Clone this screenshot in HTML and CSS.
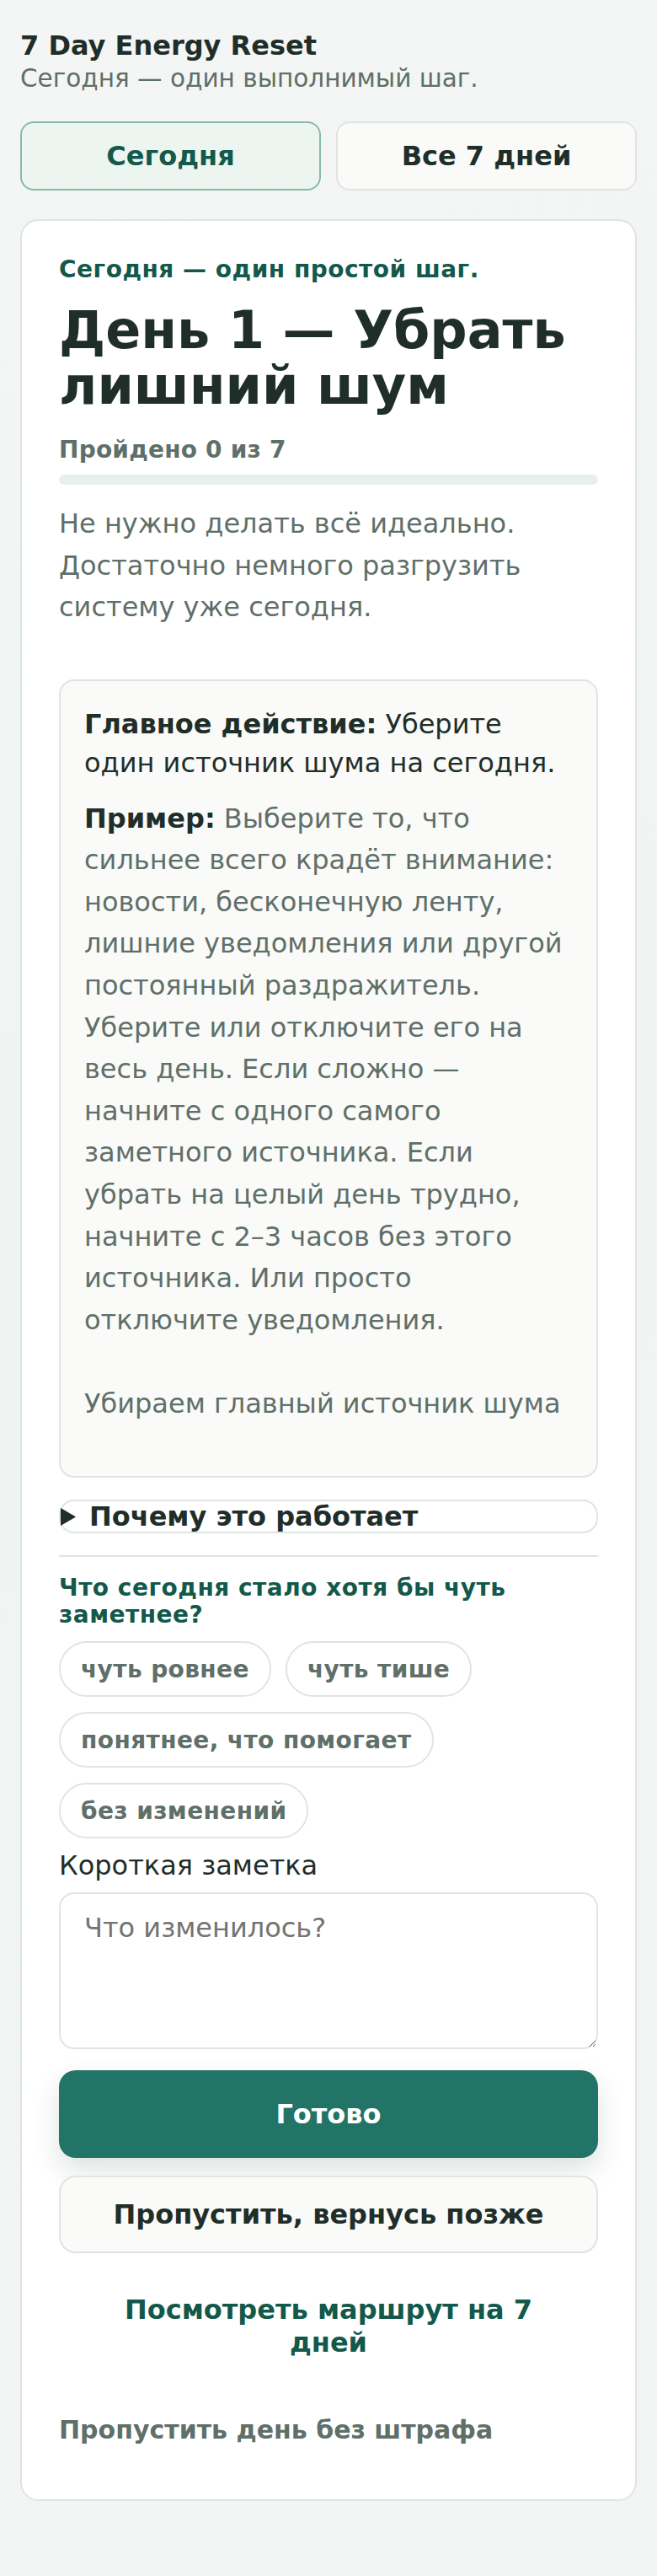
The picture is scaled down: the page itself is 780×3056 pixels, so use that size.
FILE: index.html
```html
<!DOCTYPE html>
<html lang="ru">
<head>
<meta charset="utf-8">
<meta name="viewport" content="width=device-width, initial-scale=1">
<title>7 Day Energy Reset</title>
<link rel="stylesheet" href="styles.css">
</head>
<body>
<main class="app">
  <header class="top">
    <h1 class="brand">7 Day Energy Reset</h1>
    <p class="tagline">Сегодня — один выполнимый шаг.</p>
  </header>

  <nav class="tabs">
    <button class="tab tab-active" type="button">Сегодня</button>
    <button class="tab" type="button">Все 7 дней</button>
  </nav>

  <section class="card">
    <p class="eyebrow">Сегодня — один простой шаг.</p>
    <h2 class="day-title">День 1 — Убрать лишний шум</h2>
    <p class="progress-label">Пройдено 0 из 7</p>
    <div class="progress"><div class="progress-fill" style="width:0%"></div></div>
    <p class="intro">Не нужно делать всё идеально. Достаточно немного разгрузить систему уже сегодня.</p>

    <div class="action">
      <p class="action-main"><strong>Главное действие:</strong> Уберите один источник шума на сегодня.</p>
      <p class="action-example"><strong>Пример:</strong> Выберите то, что сильнее всего крадёт внимание: новости, бесконечную ленту, лишние уведомления или другой постоянный раздражитель. Уберите или отключите его на весь день. Если сложно — начните с одного самого заметного источника. Если убрать на целый день трудно, начните с 2–3 часов без этого источника. Или просто отключите уведомления.<br><br>Убираем главный источник шума</p>
    </div>

    <details class="why">
      <summary>Почему это работает</summary>
      <p class="why-text">Меньше входящих сигналов — меньше переключений внимания и меньше фоновой усталости.</p>
    </details>

    <hr class="divider">

    <h3 class="question">Что сегодня стало хотя бы чуть заметнее?</h3>
    <div class="chips">
      <button class="chip" type="button">чуть ровнее</button>
      <button class="chip" type="button">чуть тише</button>
      <button class="chip" type="button">понятнее, что помогает</button>
      <button class="chip" type="button">без изменений</button>
    </div>

    <label class="note-label" for="note">Короткая заметка</label>
    <textarea id="note" class="note" placeholder="Что изменилось?"></textarea>

    <button class="btn btn-primary" type="button">Готово</button>
    <button class="btn btn-secondary" type="button">Пропустить, вернусь позже</button>
    <button class="btn-link" type="button">Посмотреть маршрут на 7 дней</button>
    <button class="btn-skip" type="button">Пропустить день без штрафа</button>
  </section>
</main>
</body>
</html>
```

FILE: styles.css
```css
* {
  box-sizing: border-box;
}

html {
  background: linear-gradient(160deg, #f4f6f5 0%, #eff4f2 45%, #f3f5f4 100%);
  min-height: 100%;
}

body {
  margin: 0;
  font-family: "DejaVu Sans", "Noto Sans", sans-serif;
  color: #1f2e29;
}

.app {
  padding: 36px 24px 90px;
}

.brand {
  margin: 0;
  font-size: 32px;
  line-height: 37px;
  font-weight: 700;
  color: #1f2e29;
}

.tagline {
  margin: 3px 0 0;
  font-size: 29.5px;
  line-height: 34px;
  color: #5f6f69;
}

.tabs {
  margin-top: 34px;
  display: grid;
  grid-template-columns: 1fr 1fr;
  gap: 18px;
}

.tab {
  height: 82px;
  border: 2px solid #dfe5e2;
  border-radius: 16px;
  background: #fafaf8;
  font-family: inherit;
  font-size: 32px;
  font-weight: 700;
  color: #1f2e29;
}

.tab-active {
  background: #edf5f1;
  border-color: #88b9ab;
  color: #13594b;
}

.card {
  margin-top: 34px;
  padding: 41px 44px 44px;
  background: #ffffff;
  border: 2px solid #dde5e2;
  border-radius: 22px;
}

.eyebrow {
  margin: 0;
  font-size: 28px;
  line-height: 33.6px;
  font-weight: 700;
  letter-spacing: 0.5px;
  color: #13594b;
}

.day-title {
  margin: 22px 0 0;
  font-size: 62px;
  line-height: 66.7px;
  font-weight: 700;
  color: #1f2e29;
}

.progress-label {
  margin: 25.5px 0 0;
  font-size: 28px;
  line-height: 32.6px;
  font-weight: 700;
  letter-spacing: 0.2px;
  color: #5f6f69;
}

.progress {
  margin-top: 13px;
  height: 12px;
  border-radius: 6px;
  background: #e9efec;
  overflow: hidden;
}

.progress-fill {
  height: 100%;
  background: #217466;
}

.intro {
  margin: 22px 0 0;
  font-size: 32px;
  line-height: 49.6px;
  color: #5f6f69;
}

.action {
  margin-top: 60px;
  padding: 28px;
  background: #fafaf8;
  border: 2px solid #dfe5e2;
  border-radius: 18px;
}

.action-main {
  margin: 0;
  font-size: 32px;
  line-height: 46.4px;
  color: #1f2e29;
}

.action-example {
  margin: 18px 0 32px;
  font-size: 32px;
  line-height: 49.6px;
  color: #5f6f69;
}

.action-example strong {
  color: #1f2e29;
}

.why {
  margin-top: 26.5px;
  border: 2px solid #dfe5e2;
  border-radius: 18px;
}

.why summary {
  font-size: 32px;
  line-height: 36px;
  font-weight: 700;
  color: #1f2e29;
  cursor: pointer;
}

.why-text {
  margin: 0;
  padding: 12px 20px 20px;
  font-size: 28px;
  line-height: 1.5;
  color: #5f6f69;
}

.divider {
  margin: 26px 0 0;
  height: 2px;
  border: 0;
  background: #dfe5e2;
}

.question {
  margin: 20.5px 0 0;
  font-size: 28px;
  line-height: 32.2px;
  font-weight: 700;
  letter-spacing: 0.5px;
  color: #13594b;
}

.chips {
  margin-top: 15.4px;
  display: flex;
  flex-wrap: wrap;
  gap: 18px 17px;
}

.chip {
  height: 66px;
  padding: 0 24px;
  border: 2px solid #dfe5e2;
  border-radius: 999px;
  background: #ffffff;
  font-family: inherit;
  font-size: 28px;
  font-weight: 700;
  letter-spacing: 0.4px;
  color: #5f6f69;
}

.note-label {
  display: block;
  margin-top: 13.3px;
  font-size: 32px;
  line-height: 37.25px;
  color: #1f2e29;
}

.note {
  display: block;
  margin-top: 13.5px;
  width: 100%;
  height: 186px;
  padding: 22px 28px;
  border: 2px solid #dfe5e2;
  border-radius: 18px;
  background: #ffffff;
  font-family: inherit;
  font-size: 32px;
  line-height: 37.25px;
  color: #1f2e29;
  resize: vertical;
}

.note::placeholder {
  color: #737373;
}

.btn {
  display: flex;
  align-items: center;
  justify-content: center;
  width: 100%;
  border-radius: 20px;
  font-family: inherit;
  font-size: 32px;
  font-weight: 700;
}

.btn-primary {
  margin-top: 25px;
  height: 104px;
  border: 0;
  background: #217466;
  color: #ffffff;
  box-shadow: 0 14px 32px rgba(24, 44, 38, 0.14);
}

.btn-secondary {
  margin-top: 21px;
  height: 92px;
  border: 2px solid #dfe5e2;
  background: #fafaf8;
  color: #1f2e29;
}

.btn-link {
  display: block;
  width: 100%;
  margin-top: 24px;
  padding: 24px 60px;
  border: 0;
  background: none;
  font-family: inherit;
  font-size: 32px;
  line-height: 38.4px;
  font-weight: 700;
  color: #13594b;
  text-align: center;
}

.btn-skip {
  display: block;
  width: 100%;
  margin-top: 24px;
  padding: 20px 0;
  border: 0;
  background: none;
  font-family: inherit;
  font-size: 30px;
  line-height: 34.9px;
  font-weight: 700;
  color: #5f6f69;
  text-align: left;
}
```
